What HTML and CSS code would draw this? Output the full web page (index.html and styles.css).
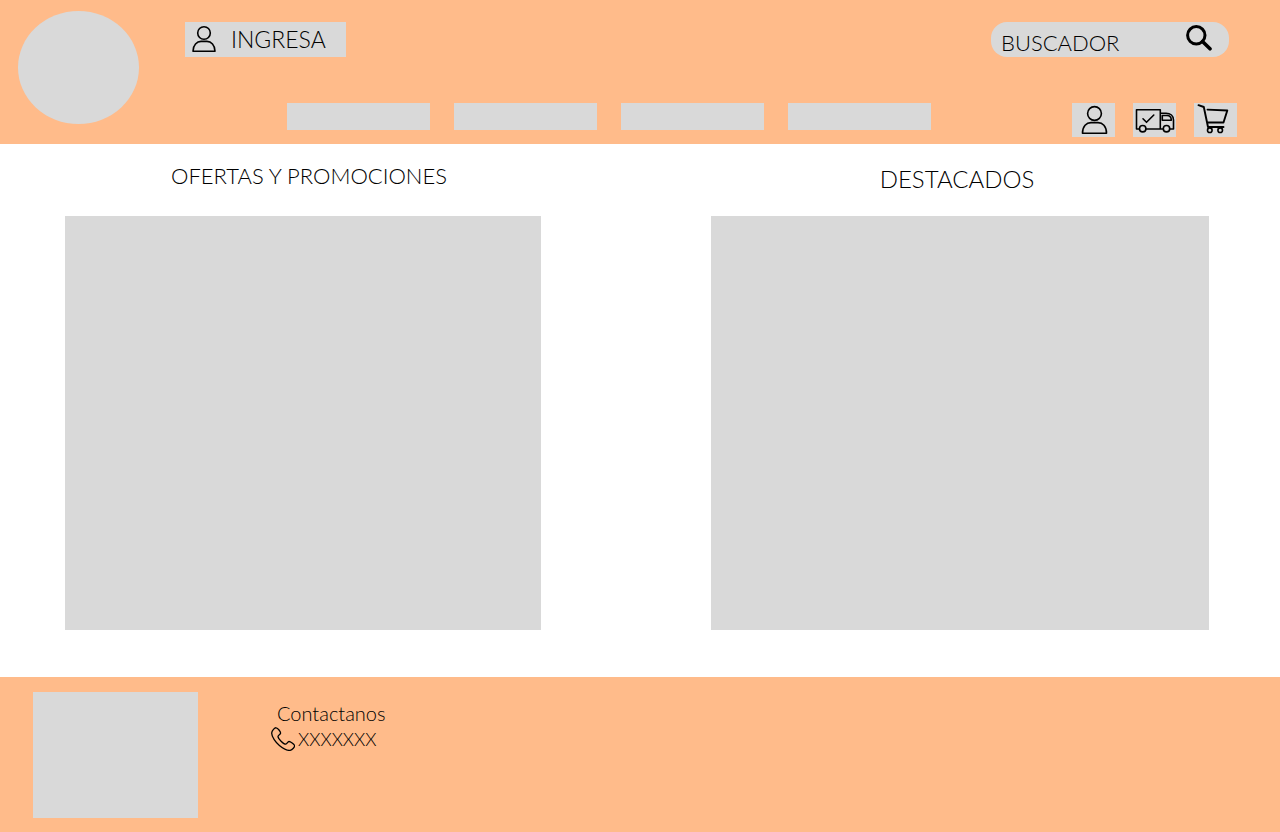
FILE: index.html
```html
<!DOCTYPE html>
<html lang="es">
<head>
<meta charset="utf-8">
<meta name="viewport" content="width=device-width, initial-scale=1">
<title>Tienda</title>
<link rel="stylesheet" href="styles.css">
</head>
<body>
<header class="header">
  <a class="logo" href="#" aria-label="Inicio"></a>
  <div class="header-rows">
    <div class="top-row">
      <button class="login" type="button">
        <svg class="login-icon" viewBox="0 0 26 28" aria-hidden="true"><circle cx="13" cy="8" r="6.3"/><path d="M2 26.2C2 20 6 16.4 10 16.4H16C20 16.4 24 20 24 26.2Z"/></svg>
        <span>INGRESA</span>
      </button>
      <form class="search">
        <input class="search-input" type="search" placeholder="BUSCADOR" aria-label="Buscador">
        <button class="search-button" type="submit" aria-label="Buscar">
          <svg viewBox="0 0 26 26" aria-hidden="true"><circle cx="10.3" cy="10.3" r="8.7" stroke-width="3"/><path d="M16.5 16.5L24 23.8" stroke-width="3.6"/></svg>
        </button>
      </form>
    </div>
    <div class="bottom-row">
      <nav class="nav" aria-label="Principal">
        <a class="nav-item" href="#" aria-label="Sección 1"></a>
        <a class="nav-item" href="#" aria-label="Sección 2"></a>
        <a class="nav-item" href="#" aria-label="Sección 3"></a>
        <a class="nav-item" href="#" aria-label="Sección 4"></a>
      </nav>
      <div class="tools">
        <button class="tool" type="button" aria-label="Mi cuenta">
          <svg viewBox="0 0 43 34" aria-hidden="true"><circle cx="22.5" cy="10.5" r="6.9"/><path d="M10.5 30.2C10.5 23.4 14.5 19.6 19 19.6H26C30.5 19.6 34.5 23.4 34.5 30.2Z"/></svg>
        </button>
        <button class="tool" type="button" aria-label="Envíos">
          <svg viewBox="0 0 43 34" aria-hidden="true"><path d="M6 26H3.5V6.8H27.3V26H13M27.3 10.2H33C37.5 10.2 40.5 13 40.5 17V26H37M27.3 26H30M29.3 12.5H34C37 12.5 38.3 14.5 38.3 17.2H29.3ZM10 15.8L13.5 19.3L20.8 12"/><circle cx="9.7" cy="25.7" r="3.2"/><circle cx="33.5" cy="25.7" r="3.2"/></svg>
        </button>
        <button class="tool" type="button" aria-label="Carrito">
          <svg viewBox="0 0 43 34" aria-hidden="true"><path d="M4.5 2.2L9.8 4L14 24H29.5M13.5 6.6L33.3 7.5L29.5 19.5H13" stroke-width="1.9"/><circle cx="15.8" cy="27.2" r="2.3"/><circle cx="26.2" cy="27.2" r="2.3"/></svg>
        </button>
      </div>
    </div>
  </div>
</header>
<main class="main">
  <section class="panel">
    <h2 class="panel-title offers-title">OFERTAS Y PROMOCIONES</h2>
    <div class="panel-box"></div>
  </section>
  <section class="panel">
    <h2 class="panel-title featured-title">DESTACADOS</h2>
    <div class="panel-box"></div>
  </section>
</main>
<footer class="footer">
  <div class="footer-box"></div>
  <address class="contact">
    <span class="contact-title">Contactanos</span>
    <a class="phone" href="#">
      <svg class="phone-icon" viewBox="0 0 24 24" aria-hidden="true"><path d="M5.2.8C3.8.5.8 3.5.7 6C.5 9.8 5 15.7 8.4 18.5C12 21.5 16.5 23.8 19.2 23.3C21.3 22.8 24 20 23.5 18.4C23.1 17.1 19.5 14.5 18 14.5C16.7 14.5 16 17 14.8 17.2C12.8 17.3 6.8 11.7 7 9.4C7.1 8 9.5 7.4 9.6 6.1C9.7 4.5 6.8 1.1 5.2.8Z"/></svg>
      <span>XXXXXXX</span>
    </a>
  </address>
</footer>
</body>
</html>
```

FILE: styles.css
```css
* {
  box-sizing: border-box;
}

body {
  display: flex;
  flex-direction: column;
  min-height: 100vh;
  margin: 0;
  background: #fff;
  color: #000;
  font-family: "Lato", "Open Sans", sans-serif;
  font-weight: 300;
}

button,
input {
  margin: 0;
  border: 0;
  padding: 0;
  color: inherit;
  font: inherit;
}

button {
  cursor: pointer;
}

a {
  color: inherit;
  text-decoration: none;
}

svg {
  display: block;
  fill: none;
  stroke: #000;
  stroke-width: 1.6;
  stroke-linecap: round;
  stroke-linejoin: round;
}

.header {
  display: flex;
  gap: 46px;
  padding: 11px 43px 7px 18px;
  background: #ffbb8a;
}

.logo {
  flex: none;
  width: 121px;
  height: 113px;
  border-radius: 50%;
  background: #d9d9d9;
}

.header-rows {
  display: flex;
  flex: 1;
  flex-direction: column;
  gap: 46px;
  padding-top: 11px;
}

.top-row,
.bottom-row {
  display: flex;
  justify-content: space-between;
}

.top-row {
  padding-right: 8px;
}

.login {
  display: flex;
  align-items: center;
  gap: 14px;
  width: 161px;
  height: 35px;
  padding: 0 6px 2px;
  background: #d9d9d9;
  font-size: 23px;
  line-height: 28px;
}

.login-icon {
  width: 26px;
  height: 28px;
}

.search {
  display: flex;
  align-items: center;
  justify-content: space-between;
  width: 238px;
  height: 35px;
  padding: 0 17px 0 10px;
  border-radius: 16px;
  background: #d9d9d9;
}

.search-input {
  width: 150px;
  height: 35px;
  padding-top: 6px;
  background: transparent;
  font-size: 22px;
}

.search-input::placeholder {
  color: #000;
  opacity: 1;
}

.search-button {
  width: 26px;
  height: 26px;
  margin-bottom: 4px;
  background: transparent;
}

.nav {
  display: flex;
  gap: 24px;
  padding-left: 102px;
}

.nav-item {
  width: 143px;
  height: 27px;
  background: #d9d9d9;
}

.tools {
  display: flex;
  gap: 18px;
}

.tool {
  width: 43px;
  height: 34px;
  background: #d9d9d9;
}

.main {
  display: grid;
  flex: 1;
  grid-template-columns: 476fr 498fr;
  gap: 170px;
  padding: 16px 71px 47px 65px;
}

.panel {
  display: flex;
  flex-direction: column;
}

.panel-title {
  height: 56px;
  margin: 0;
  font-size: 24px;
  font-weight: 300;
  line-height: 32px;
  text-align: center;
}

.offers-title {
  padding-left: 12px;
  font-size: 22px;
}

.featured-title {
  padding: 3px 6px 0 0;
}

.panel-box {
  flex: 1;
  min-height: 414px;
  background: #d9d9d9;
}

.footer {
  display: flex;
  gap: 73px;
  padding: 15px 33px 14px;
  background: #ffbb8a;
}

.footer-box {
  width: 165px;
  height: 126px;
  background: #d9d9d9;
}

.contact {
  padding-top: 8px;
  font-size: 20px;
  font-style: normal;
  line-height: 26px;
}

.contact-title {
  display: block;
  padding-left: 6px;
}

.phone {
  display: flex;
  align-items: center;
  gap: 3px;
  font-size: 18px;
}

.phone-icon {
  width: 24px;
  height: 24px;
  stroke-width: 1.3;
}
```
